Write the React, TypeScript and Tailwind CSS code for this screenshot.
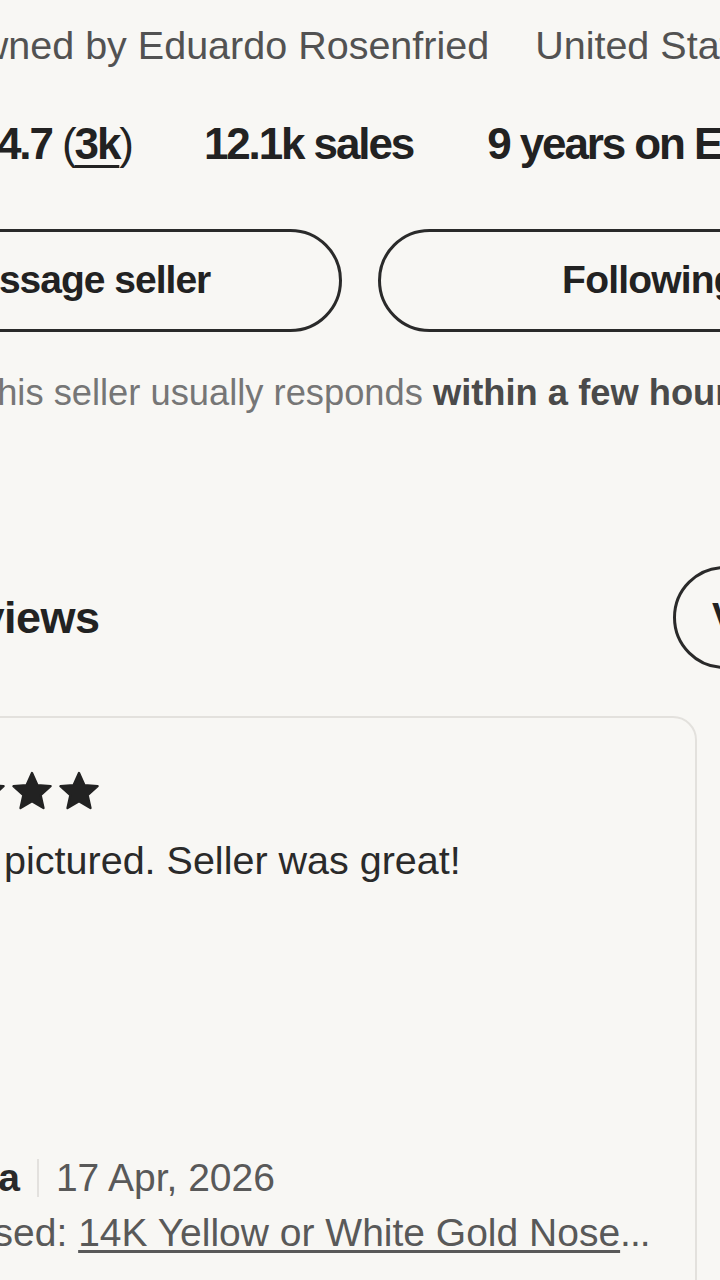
import React from "react";

const Star = () => (
  <svg viewBox="0 0 24 24" className="w-[46px] h-[46px] shrink-0" fill="#222222" stroke="#222222" strokeWidth="1.2" strokeLinejoin="round">
    <path d="M12 2.6l2.8 6.3 6.9.6-5.2 4.6 1.5 6.8L12 17.3l-6 3.6 1.5-6.8-5.2-4.6 6.9-.6z" />
  </svg>
);

export default function App() {
  return (
    <div
      className="w-[720px] h-[1280px] overflow-hidden bg-[#f8f7f4] text-[#222222]"
      style={{ fontFamily: '"Liberation Sans", Arial, sans-serif' }}
    >
      {/* Owner line */}
      <div className="pt-[26px] ml-[-51px] flex items-center whitespace-nowrap text-[39.5px] leading-none text-[#525252]">
        <span>Owned by Eduardo Rosenfried</span>
        <span className="mx-[23px] w-[2px] h-[38px] bg-[#dad8d4]" />
        <span>United States</span>
      </div>

      {/* Stats line */}
      <div className="mt-[56px] ml-[-3px] flex items-center whitespace-nowrap text-[44px] leading-none font-bold tracking-[-2.1px] text-[#222222]">
        <span>
          4.7 <span className="font-normal">(</span>
          <span className="underline decoration-[3px] underline-offset-[6px]">3k</span>
          <span className="font-normal">)</span>
        </span>
        <span className="ml-[72px]">12.1k sales</span>
        <span className="ml-[74px]">9 years on Etsy</span>
      </div>

      {/* Buttons */}
      <div className="mt-[63px] ml-[-199px] flex gap-[36px]">
        <button className="w-[541px] h-[103px] shrink-0 rounded-full border-[3px] border-[#2a2a2a] flex items-center justify-center pl-[14px] text-[39px] font-bold tracking-[-1px] text-[#222222]">
          Message seller
        </button>
        <button className="w-[541px] h-[103px] shrink-0 rounded-full border-[3px] border-[#2a2a2a] flex items-center justify-center pl-[2px] text-[39px] font-bold tracking-[-0.8px] text-[#222222]">
          Following
        </button>
      </div>

      {/* Response time */}
      <div className="mt-[43px] ml-[-25px] whitespace-nowrap text-[36.3px] leading-none text-[#767676]">
        This seller usually responds <span className="font-bold text-[#4a4a4a]">within a few hours.</span>
      </div>

      {/* Reviews header */}
      <div className="mt-[155px] ml-[-77px] h-[103px] flex items-center whitespace-nowrap">
        <h2 className="text-[45px] leading-none font-bold tracking-[-0.5px] text-[#222222]">Reviews</h2>
        <div className="flex-1" />
        <button className="mr-[-293px] w-[340px] h-[103px] shrink-0 rounded-full border-[3px] border-[#2a2a2a] flex items-center pl-[36px] text-[38px] font-bold text-[#222222]">
          View all
        </button>
      </div>

      {/* Review card */}
      <div className="mt-[47px] ml-[-200px] w-[897px] h-[700px] rounded-[24px] border-2 border-[#e3e1dd] pt-[50px] pl-[200px]">
        <div className="ml-[-134px] flex gap-[1px]">
          <Star />
          <Star />
          <Star />
          <Star />
          <Star />
        </div>
        <div className="mt-[27px] ml-[-55px] whitespace-nowrap text-[39.5px] leading-none text-[#2a2a2a]">
          As pictured. Seller was great!
        </div>
        <div className="mt-[278px] ml-[-84px] flex items-center whitespace-nowrap text-[39px] leading-none">
          <span className="font-bold text-[#2a2a2a]">Maria</span>
          <span className="mx-[17px] w-[2px] h-[38px] bg-[#e3e1de]" />
          <span className="text-[#595959]">17 Apr, 2026</span>
        </div>
        <div className="mt-[16px] ml-[-132px] whitespace-nowrap text-[39px] leading-none text-[#595959]">
          Purchased:{" "}
          <span className="underline decoration-[3px] underline-offset-[4px]">14K Yellow or White Gold Nose</span>
          <span className="tracking-[-1px]">...</span>
        </div>
      </div>
    </div>
  );
}
